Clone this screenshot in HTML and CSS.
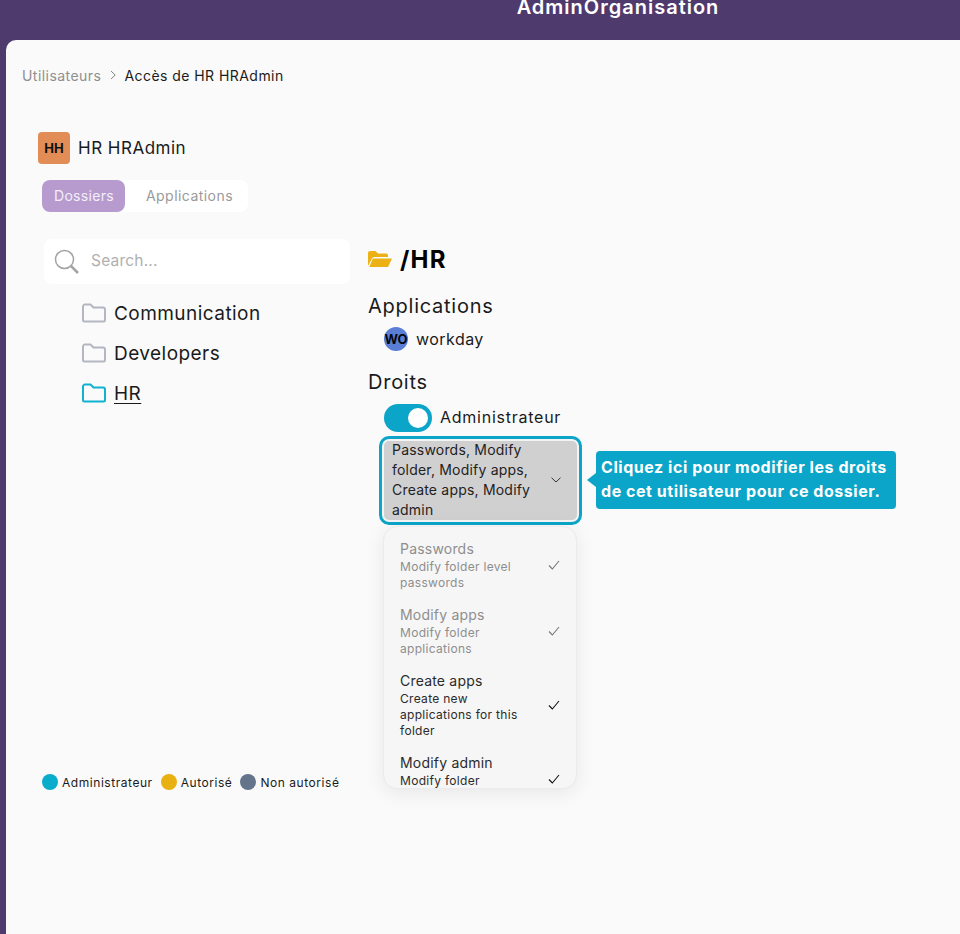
FILE: index.html
```html
<!DOCTYPE html>
<html lang="fr">
<head>
  <meta charset="UTF-8">
  <meta name="viewport" content="width=device-width, initial-scale=1.0">
  <title>AdminOrganisation</title>
  <link rel="stylesheet" href="styles.css">
</head>
<body>
  <!-- Top bar -->
  <header class="topbar">
    <div class="topbar-title">AdminOrganisation</div>
  </header>

  <main class="page">
    <!-- Breadcrumb -->
    <nav class="breadcrumb">
      <span class="crumb-parent">Utilisateurs</span>
      <svg class="crumb-sep" viewBox="0 0 10 10"><path d="M3 1l4.2 4L3 9"/></svg>
      <span class="crumb-current">Accès de HR HRAdmin</span>
    </nav>

    <!-- User -->
    <div class="user">
      <div class="user-avatar">HH</div>
      <div class="user-name">HR HRAdmin</div>
    </div>

    <div class="tabs">
      <div class="tab tab-active">Dossiers</div>
      <div class="tab">Applications</div>
    </div>

    <div class="columns">
      <!-- Folder tree -->
      <section class="left-col">
        <div class="search">
          <svg class="search-icon" viewBox="0 0 26 26"><circle cx="10.5" cy="10.5" r="9"/><path class="search-handle" d="M17 17l7 7"/></svg>
          <span class="search-text">Search...</span>
        </div>
        <ul class="tree">
          <li class="tree-item">
            <svg class="folder" viewBox="0 0 24 20"><path d="M1 3.5a2 2 0 0 1 2-2h5.5l3 3H21a2 2 0 0 1 2 2V17a1.500 1.500 0 0 1-1.500 1.500h-19A1.500 1.500 0 0 1 1 17z"/></svg>
            <span>Communication</span>
          </li>
          <li class="tree-item">
            <svg class="folder" viewBox="0 0 24 20"><path d="M1 3.5a2 2 0 0 1 2-2h5.5l3 3H21a2 2 0 0 1 2 2V17a1.500 1.500 0 0 1-1.500 1.500h-19A1.500 1.500 0 0 1 1 17z"/></svg>
            <span>Developers</span>
          </li>
          <li class="tree-item tree-item-active">
            <svg class="folder" viewBox="0 0 24 20"><path d="M1 3.5a2 2 0 0 1 2-2h5.5l3 3H21a2 2 0 0 1 2 2V17a1.500 1.500 0 0 1-1.500 1.500h-19A1.500 1.500 0 0 1 1 17z"/></svg>
            <span class="tree-link">HR</span>
          </li>
        </ul>
        <div class="legend">
          <span class="legend-dot dot-admin"></span><span class="legend-label">Administrateur</span>
          <span class="legend-dot dot-auth"></span><span class="legend-label">Autorisé</span>
          <span class="legend-dot dot-none"></span><span class="legend-label">Non autorisé</span>
        </div>
      </section>

      <!-- Folder detail -->
      <section class="right-col">
        <h1 class="folder-title">
          <svg class="folder-open" viewBox="0 0 24 18"><path d="M0 3a2 2 0 0 1 2-2h5.500l2.500 2.500h8a2 2 0 0 1 2 2V7H6.500a3 3 0 0 0-2.700 1.700L0 16z"/><path d="M5.500 8.500H24l-4 8.500H1.300l3-7.400a1.500 1.500 0 0 1 1.200-1.100z"/></svg>
          /HR
        </h1>
        <h2 class="section-title">Applications</h2>
        <div class="app">
          <div class="app-avatar">WO</div>
          <div class="app-name">workday</div>
        </div>
        <h2 class="section-title section-rights">Droits</h2>
        <div class="toggle-row">
          <div class="toggle"><div class="toggle-knob"></div></div>
          <div class="toggle-label">Administrateur</div>
        </div>
        <div class="select-wrap">
          <div class="select">
            <div class="select-text">Passwords, Modify folder, Modify apps, Create apps, Modify admin</div>
            <svg class="select-chevron" viewBox="0 0 10 6"><path d="M.5.700L5 5 9.500.700"/></svg>
          </div>
          <div class="tooltip">Cliquez ici pour modifier les droits de cet utilisateur pour ce dossier.</div>
          <div class="dropdown">
            <div class="option option-off">
              <div class="option-body">
                <div class="option-title">Passwords</div>
                <div class="option-desc">Modify folder level passwords</div>
              </div>
              <svg class="check" viewBox="0 0 12 10"><path d="M1 5.500L4.300 9 11 1"/></svg>
            </div>
            <div class="option option-off">
              <div class="option-body">
                <div class="option-title">Modify apps</div>
                <div class="option-desc">Modify folder applications</div>
              </div>
              <svg class="check" viewBox="0 0 12 10"><path d="M1 5.500L4.300 9 11 1"/></svg>
            </div>
            <div class="option">
              <div class="option-body">
                <div class="option-title">Create apps</div>
                <div class="option-desc">Create new applications for this folder</div>
              </div>
              <svg class="check" viewBox="0 0 12 10"><path d="M1 5.500L4.300 9 11 1"/></svg>
            </div>
            <div class="option">
              <div class="option-body">
                <div class="option-title">Modify admin</div>
                <div class="option-desc">Modify folder administrators</div>
              </div>
              <svg class="check" viewBox="0 0 12 10"><path d="M1 5.500L4.300 9 11 1"/></svg>
            </div>
          </div>
        </div>
      </section>
    </div>
  </main>
</body>
</html>
```

FILE: styles.css
```css
* {
  box-sizing: border-box;
}

body {
  font-family: 'Inter', 'Noto Sans', sans-serif;
  background: #4f3a6e;
  color: #1a1a1a;
  margin: 0;
  height: 934px;
  overflow: hidden;
  display: flex;
  flex-direction: column;
}

/* Top bar */
.topbar {
  height: 40px;
  flex: none;
  display: flex;
  justify-content: center;
  padding-left: 276px;
}

.topbar-title {
  color: #ffffff;
  font-size: 20px;
  font-weight: 600;
  line-height: 15px;
  letter-spacing: 1px;
}

.page {
  flex: 1;
  margin-left: 6px;
  background: #fafafa;
  border-top-left-radius: 10px;
  padding: 25px 0 0 16px;
}

/* Breadcrumb */
.breadcrumb {
  display: flex;
  align-items: center;
  height: 20px;
  font-size: 14px;
  letter-spacing: 0.45px;
}

.crumb-parent {
  color: #8f8f8f;
}

.crumb-sep {
  width: 10px;
  height: 10px;
  margin: 0 6px 0 7px;
  fill: none;
  stroke: #777;
  stroke-width: 0.9;
}

.crumb-current {
  color: #1c1c1c;
}

/* User */
.user {
  display: flex;
  align-items: center;
  gap: 8px;
  margin: 47px 0 0 16px;
}

.user-avatar {
  width: 32px;
  height: 32px;
  border-radius: 4px;
  background: #e28d55;
  color: #111;
  font-size: 13px;
  font-weight: 700;
  display: flex;
  align-items: center;
  justify-content: center;
}

.user-name {
  font-size: 17px;
  letter-spacing: 0.5px;
}

.tabs {
  display: inline-flex;
  margin: 16px 0 0 20px;
  background: #ffffff;
  border-radius: 8px;
  font-size: 14px;
  letter-spacing: 0.3px;
}

.tab {
  height: 32px;
  padding: 0 12px;
  line-height: 32px;
  color: #9a9a9a;
  width: 83px;
  text-align: center;
  border-radius: 8px;
  white-space: nowrap;
}

.tab + .tab {
  width: 123px;
  padding: 0 0 0 6px;
  letter-spacing: 0.45px;
}

.tab-active {
  background: #b79bce;
  color: #f4effa;
}

/* Columns */
.columns {
  display: flex;
  margin-top: 27px;
}

.left-col {
  width: 346px;
  padding-left: 22px;
  flex: none;
  display: flex;
  flex-direction: column;
}

.search {
  width: 306px;
  height: 45px;
  background: #ffffff;
  border-radius: 8px;
  display: flex;
  align-items: center;
  padding-left: 10px;
}

.search-icon {
  width: 26px;
  height: 26px;
  fill: none;
  stroke: #a3a3a3;
  stroke-width: 1.5;
}

.search-handle {
  stroke-width: 2.5;
}

.search-text {
  margin: 0 0 2px 11px;
  color: #b0b0b0;
  font-size: 15.5px;
  letter-spacing: 0.2px;
}

.tree {
  list-style: none;
  margin: 9px 0 0;
  padding: 0 0 0 38px;
}

.tree-item {
  height: 40px;
  display: flex;
  align-items: center;
  gap: 8px;
  font-size: 19px;
  letter-spacing: 0.45px;
}

.folder {
  width: 24px;
  height: 20px;
  fill: none;
  stroke: #b4b6c2;
  stroke-width: 2;
  stroke-linejoin: round;
}

.tree-item-active .folder {
  stroke: #11b1d0;
}

.tree-link {
  text-decoration: underline;
  text-underline-offset: 3px;
  text-decoration-thickness: 1px;
}

.legend {
  display: flex;
  align-items: center;
  margin: 361px 0 0 -2px;
  font-size: 12px;
  letter-spacing: 0.55px;
  white-space: nowrap;
}

.legend-dot {
  width: 16px;
  height: 16px;
  border-radius: 50%;
  margin-right: 4px;
  flex: none;
}

.legend-label {
  margin-right: 8px;
}

.dot-admin {
  background: #0aaccc;
}

.dot-auth {
  background: #e9b10f;
}

.dot-none {
  background: #64748b;
}

/* Right column */
.right-col {
  width: 214px;
  flex: none;
  padding-top: 4px;
}

.folder-title {
  display: flex;
  align-items: center;
  gap: 8px;
  margin: 0;
  height: 32px;
  font-size: 24px;
  font-weight: 700;
  letter-spacing: 1.2px;
  color: #000;
}

.folder-open {
  width: 24px;
  height: 18px;
  fill: #ecb215;
}

.section-title {
  margin: 16px 0 0;
  font-size: 20px;
  font-weight: 400;
  height: 30px;
  line-height: 30px;
  letter-spacing: 0.75px;
}

.app {
  display: flex;
  align-items: center;
  gap: 8px;
  height: 24px;
  margin: 6px 0 0 16px;
}

.app-avatar {
  width: 24px;
  height: 24px;
  border-radius: 50%;
  background: #5a7ed6;
  color: #05070f;
  font-size: 13px;
  font-weight: 700;
  text-align: center;
  line-height: 24px;
}

.app-name {
  font-size: 16px;
  letter-spacing: 0.45px;
}

.toggle-label {
  font-size: 16px;
  letter-spacing: 0.75px;
  margin-bottom: 2px;
}

.section-rights {
  margin-top: 16px;
}

.toggle-row {
  display: flex;
  align-items: center;
  gap: 8px;
  height: 28px;
  margin: 7px 0 0 16px;
}

.toggle {
  width: 48px;
  height: 28px;
  border-radius: 14px;
  background: #0aa5c8;
  padding: 4px;
  display: flex;
  justify-content: flex-end;
}

.toggle-knob {
  width: 20px;
  height: 20px;
  border-radius: 50%;
  background: #ffffff;
}

/* Select, tooltip and dropdown */
.select-wrap {
  position: relative;
  margin: 4px 0 0 11px;
  width: 203px;
}

.select {
  height: 89px;
  border: 3px solid #0aa5c8;
  border-radius: 10px;
  box-shadow: inset 0 0 0 2px #f4f4f4;
  background: #d1d0d1;
  display: flex;
  align-items: center;
  padding: 0 18px 2px 10px;
}

.select-text {
  flex: 1;
  font-size: 14px;
  line-height: 20px;
  letter-spacing: 0.2px;
  color: #222;
}

.select-chevron {
  width: 10px;
  height: 6px;
  flex: none;
  fill: none;
  stroke: #222;
  stroke-width: 0.9;
}

.tooltip {
  position: absolute;
  left: 217px;
  top: 15px;
  width: 300px;
  height: 58px;
  padding: 4px 5px;
  background: #0aa5c8;
  color: #ffffff;
  border-radius: 4px;
  font-size: 16px;
  font-weight: 700;
  line-height: 24px;
  letter-spacing: 0.55px;
}

.tooltip::before {
  content: "";
  position: absolute;
  left: -9px;
  top: 22px;
  width: 0;
  height: 0;
  border-top: 7px solid transparent;
  border-bottom: 7px solid transparent;
  border-right: 9px solid #0aa5c8;
}

.dropdown {
  position: absolute;
  left: 4px;
  top: 90px;
  width: 194px;
  height: 263px;
  overflow: hidden;
  background: #f6f6f6;
  border: 1px solid #eceaec;
  border-radius: 14px;
  box-shadow: 0 4px 20px rgba(0, 0, 0, 0.08);
  padding-top: 12px;
}

.option {
  display: flex;
  align-items: center;
  padding: 0 16px 0 16px;
  margin-bottom: 14px;
  color: #2b2b2b;
}

.option-off {
  color: #8e8e8e;
}

.option-off .check {
  stroke: #777;
}

.option-body {
  flex: 1;
}

.option-title {
  font-size: 14px;
  line-height: 20px;
  letter-spacing: 0.2px;
}

.option-desc {
  max-width: 128px;
  font-size: 12px;
  line-height: 16px;
  letter-spacing: 0.3px;
}

.check {
  width: 12px;
  height: 10px;
  flex: none;
  fill: none;
  stroke: #111;
  stroke-width: 1.1;
}
```
